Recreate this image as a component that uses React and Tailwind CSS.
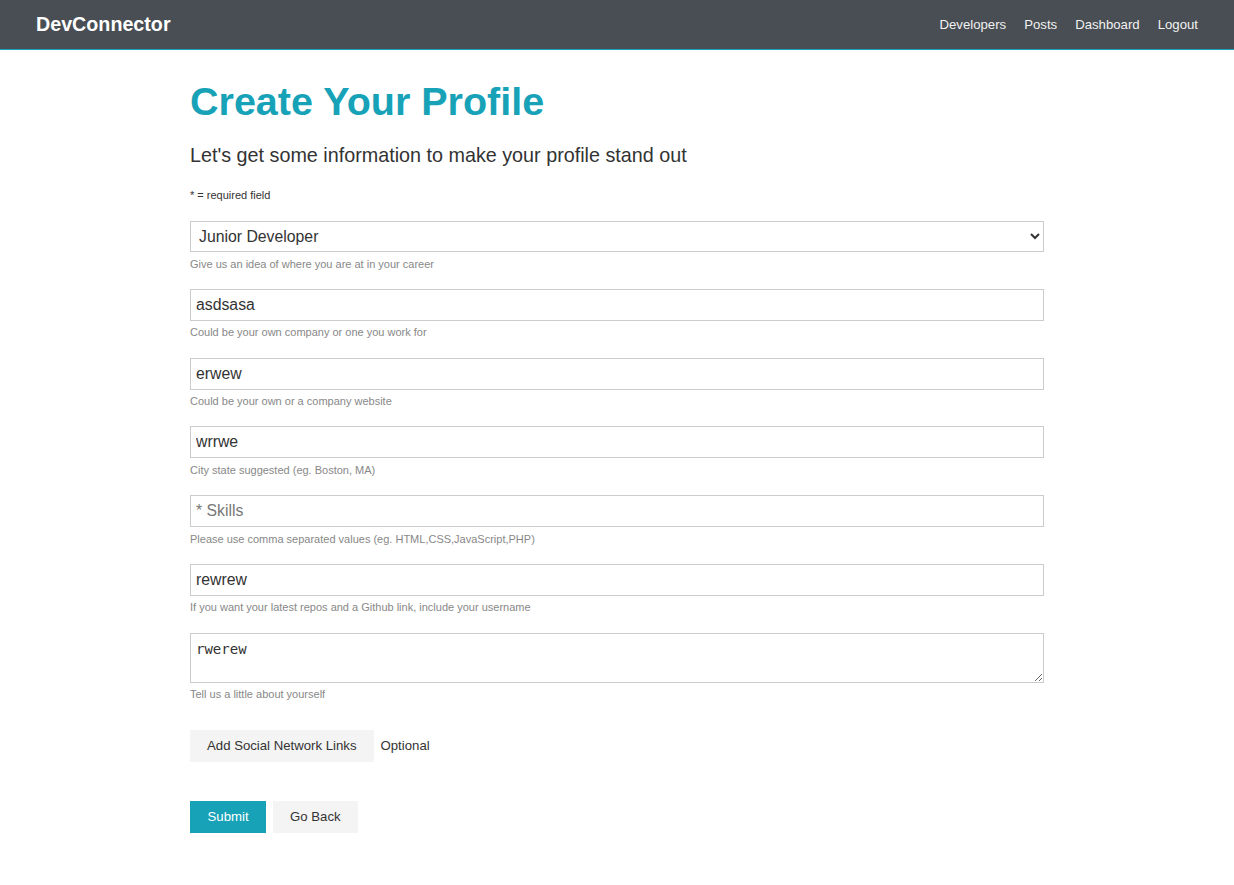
import React, { useState } from 'react';

const font = { fontFamily: '"Liberation Sans", Arial, sans-serif' };

function Field({ children, hint }) {
  return (
    <div className="mb-[16.3px]">
      {children}
      <small className="block mt-[2.5px] text-[11px] leading-[18px] text-[#888]">{hint}</small>
    </div>
  );
}

export default function App() {
  const [status, setStatus] = useState('Junior Developer');
  const [company, setCompany] = useState('asdsasa');
  const [website, setWebsite] = useState('erwew');
  const [location, setLocation] = useState('wrrwe');
  const [skills, setSkills] = useState('');
  const [github, setGithub] = useState('rewrew');
  const [bio, setBio] = useState('rwerew');

  const inputCls =
    'block w-full h-[32px] border border-[#ccc] bg-white px-[5px] text-[15.8px] text-[#333] placeholder:text-[#777] outline-none';

  return (
    <div className="min-h-screen bg-white text-[#333]" style={font}>
      {/* Navbar */}
      <nav className="h-[50px] flex items-center justify-between pl-[36px] pr-[36px] bg-[#484e53] border-b border-[#17a2b8]">
        <h1 className="text-[19.7px] font-bold text-white">DevConnector</h1>
        <ul className="flex gap-[18px] text-[13.2px] text-[#f2f2f2]">
          <li>Developers</li>
          <li>Posts</li>
          <li>Dashboard</li>
          <li>Logout</li>
        </ul>
      </nav>

      <section className="w-[854px] mx-auto">
        <h1 className="mt-[28px] text-[39.5px] leading-[47px] font-bold text-[#17a2b8]">Create Your Profile</h1>
        <p className="mt-[14px] text-[19.75px] leading-[32px] text-[#333]">
          Let's get some information to make your profile stand out
        </p>
        <small className="block mt-[15px] text-[11px] leading-[18px] text-[#333]">* = required field</small>

        <form className="mt-[17px]" onSubmit={e => e.preventDefault()}>
          <Field hint="Give us an idea of where you are at in your career">
            <select
              value={status}
              onChange={e => setStatus(e.target.value)}
              className="block w-full h-[31px] border border-[#ccc] bg-white pl-[4px] pr-[4px] text-[15.8px] text-[#333] outline-none"
              style={font}
            >
              <option value="0">* Select Professional Status</option>
              <option>Developer</option>
              <option>Junior Developer</option>
              <option>Senior Developer</option>
              <option>Manager</option>
              <option>Student or Learning</option>
              <option>Instructor or Teacher</option>
              <option>Intern</option>
              <option>Other</option>
            </select>
          </Field>
          <Field hint="Could be your own company or one you work for">
            <input className={inputCls} style={font} value={company} onChange={e => setCompany(e.target.value)} placeholder="Company" />
          </Field>
          <Field hint="Could be your own or a company website">
            <input className={inputCls} style={font} value={website} onChange={e => setWebsite(e.target.value)} placeholder="Website" />
          </Field>
          <Field hint="City state suggested (eg. Boston, MA)">
            <input className={inputCls} style={font} value={location} onChange={e => setLocation(e.target.value)} placeholder="Location" />
          </Field>
          <Field hint="Please use comma separated values (eg. HTML,CSS,JavaScript,PHP)">
            <input className={inputCls} style={font} value={skills} onChange={e => setSkills(e.target.value)} placeholder="* Skills" />
          </Field>
          <Field hint="If you want your latest repos and a Github link, include your username">
            <input className={inputCls} style={font} value={github} onChange={e => setGithub(e.target.value)} placeholder="Github Username" />
          </Field>
          <Field hint="Tell us a little about yourself">
            <textarea
              value={bio}
              onChange={e => setBio(e.target.value)}
              placeholder="A short bio of yourself"
              className="block w-full h-[50px] border border-[#ccc] bg-white px-[5px] pt-[6px] text-[14px] leading-[18px] text-[#333] outline-none resize"
              style={{ fontFamily: '"DejaVu Sans Mono", monospace' }}
            />
          </Field>

          <div className="mt-[27px] flex items-center">
            <button type="button" className="h-[32px] px-[17px] bg-[#f4f4f4] text-[13.2px] text-[#333]">
              Add Social Network Links
            </button>
            <span className="ml-[7px] text-[13.2px] text-[#333]">Optional</span>
          </div>

          <div className="mt-[39px] flex gap-[7px]">
            <button type="submit" className="h-[32px] px-[17.5px] bg-[#17a2b8] text-[13.2px] text-white">
              Submit
            </button>
            <button type="button" className="h-[32px] px-[17px] bg-[#f4f4f4] text-[13.2px] text-[#333]">
              Go Back
            </button>
          </div>
        </form>
      </section>
    </div>
  );
}
